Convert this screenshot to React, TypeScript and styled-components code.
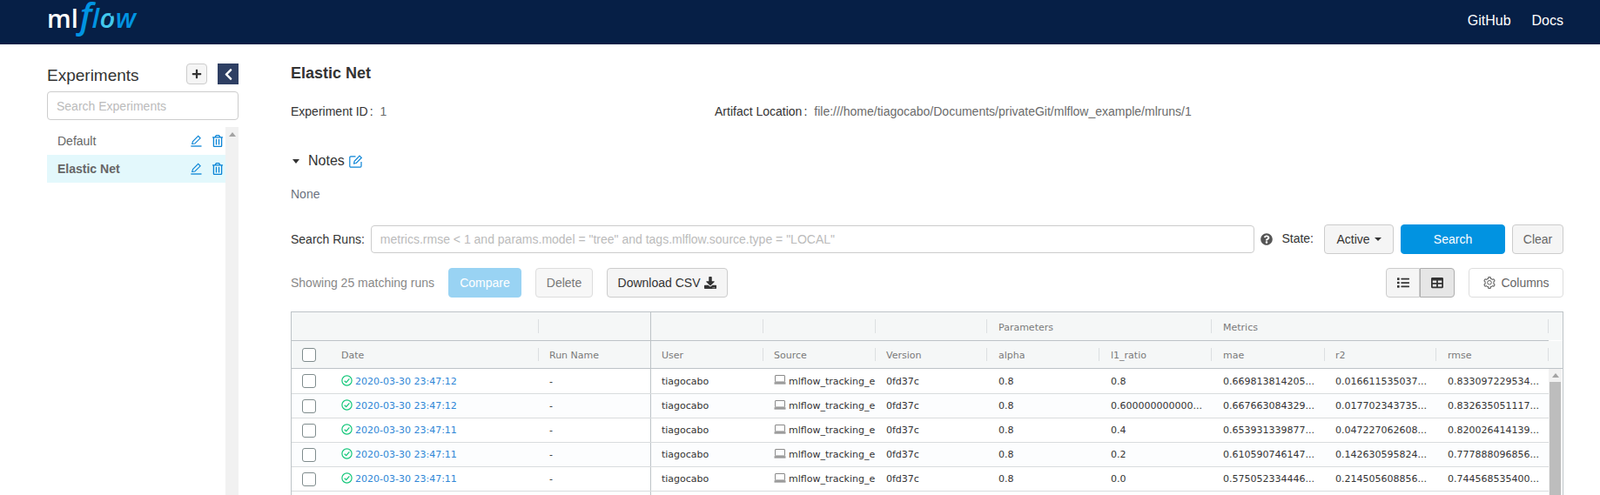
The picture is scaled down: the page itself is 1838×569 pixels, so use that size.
import React from "react";
import styled, { createGlobalStyle } from "styled-components";
import { FaRegTrashAlt, FaDownload, FaList, FaTable, FaQuestionCircle, FaPlus, FaChevronLeft } from "react-icons/fa";
import { AiOutlineSetting } from "react-icons/ai";

const Global = createGlobalStyle`
  html, body { margin: 0; padding: 0; height: 569px; overflow: hidden; background: #fff; }
  body { font-family: "Liberation Sans", Arial, sans-serif; font-size: 14px; color: #333; }
  * { box-sizing: border-box; }
`;

const NAVY = "#061f46";
const Page = styled.div`display: flex; flex-direction: column; height: 569px; overflow: hidden;`;
const TopBar = styled.header`
  height: 51px; flex: none; background: ${NAVY}; display: flex; align-items: center;
  justify-content: space-between; padding: 0 42px 0 54px;
`;
const Logo = styled.div`display: flex; align-items: baseline; height: 51px; line-height: 34px; font-family: "Open Sans", sans-serif;`;
const LogoMl = styled.span`color: #fff; font-size: 29px; font-weight: 600;`;
const LogoF = styled.span`color: #0194e2; font-size: 40px; font-style: italic; font-weight: 600; margin: 0 0 0 2px;`;
const LogoRest = styled.span`
  color: #0194e2; font-size: 31px; font-style: italic; font-weight: 600; letter-spacing: 0.5px;
`;
const LogoO = styled(LogoRest)`
  position: relative; color: #43c9ed;
  &::before, &::after {
    content: ""; position: absolute; width: 7px; height: 2.5px; background: ${NAVY}; transform: rotate(-55deg);
  }
  &::before { left: 11px; top: 11px; }
  &::after { left: 4px; top: 21px; }
`;
const TopLinks = styled.nav`display: flex; gap: 24px; margin-top: -3px;`;
const TopLink = styled.a`color: #fff; font-size: 16px;`;

const Content = styled.div`display: flex; flex: 1; min-height: 0; padding-left: 54px;`;
const Sidebar = styled.aside`width: 220px; flex: none; display: flex; flex-direction: column; padding-top: 22px;`;
const SideHead = styled.div`display: flex; align-items: center; height: 24px;`;
const SideTitle = styled.div`font-size: 19px; line-height: 24px; padding-top: 3px; color: #333; flex: 1;`;
const AddBtn = styled.button`
  width: 24px; height: 24px; padding: 0; display: flex; align-items: center; justify-content: center;
  background: #f5f5f5; border: 1px solid #ccc; border-radius: 4px; color: #333; font-size: 12px;
`;
const CollapseBtn = styled.button`
  width: 24px; height: 24px; margin-left: 12px; padding: 0; display: flex; align-items: center; justify-content: center;
  background: #2e3f63; border: 0; color: #fff; font-size: 15px;
`;
const SideSearch = styled.input`
  height: 33px; margin-top: 8px; padding: 0 10px; width: 100%; border: 1px solid #ccc; border-radius: 4px;
  font: 14px "Liberation Sans", sans-serif;
  &::placeholder { color: #bbb; }
`;
const SideListWrap = styled.div`display: flex; flex: 1; margin-top: 8px; min-height: 0;`;
const SideList = styled.div`flex: 1;`;
const SideRow = styled.div<{ $active?: boolean }>`
  height: 32px; display: flex; align-items: center; padding: 0 2px 0 12px;
  font-weight: ${p => (p.$active ? 700 : 400)}; color: #666;
  background: ${p => (p.$active ? "#e3f8fc" : "transparent")};
`;
const SideName = styled.span`flex: 1;`;
const SideIcons = styled.span`display: flex; align-items: center; gap: 10px; color: #0a84d6;`;
const SideScroll = styled.div`width: 15px; background: #f1f1f1; flex: none; display: flex; justify-content: center; padding-top: 6px;`;
const ArrowUp = styled.div`
  width: 0; height: 0; border-left: 4px solid transparent; border-right: 4px solid transparent;
  border-bottom: 5px solid #a3a3a3;
`;

const Main = styled.main`flex: 1; min-width: 0; margin-left: 60px; margin-right: 42px; padding-top: 22px;`;
const Title = styled.h1`margin: 0; font-size: 18px; line-height: 22px; font-weight: 700; color: #333;`;
const Meta = styled.div`display: flex; margin-top: 23px; line-height: 20px;`;
const MetaItem = styled.div<{ $w?: number }>`width: ${p => (p.$w ? `${p.$w}px` : "auto")}; color: #333;`;
const Colon = styled.span`margin: 0 8px 0 2px;`;
const MetaValue = styled.span`color: #6b6b6b;`;
const NotesRow = styled.div`display: flex; align-items: center; margin-top: 37px; line-height: 20px; font-size: 16px;`;
const Caret = styled.span`
  width: 0; height: 0; border-left: 4.5px solid transparent; border-right: 4.5px solid transparent;
  border-top: 5px solid #333; margin: 1px 10px 0 2px;
`;
const NotesEdit = styled.span`display: flex; color: #0a84d6; margin-left: 5px;`;
const NoneText = styled.div`margin-top: 18px; line-height: 20px; color: #6b7280;`;

const Row = styled.div<{ $mt: number }>`display: flex; align-items: center; height: 34px; margin-top: ${p => p.$mt}px;`;
const Label = styled.span<{ $up?: boolean }>`color: #333; white-space: nowrap; margin-bottom: ${p => (p.$up ? 3 : 0)}px;`;
const RunInput = styled.input`
  flex: 1; min-width: 0; height: 32px; margin-left: 7px; padding: 0 10px; border: 1px solid #ccc; border-radius: 4px;
  font: 14px "Liberation Sans", sans-serif;
  &::placeholder { color: #bbb; }
`;
const Help = styled.span`display: flex; color: #555; margin: 0 10px 0 7px; font-size: 14px;`;
const Btn = styled.button<{ $w: number; $ml?: number; $kind?: "primary" | "disabled" | "muted" | "white" | "pressed"; $flat?: "l" | "r" }>`
  height: 34px; width: ${p => p.$w}px; margin-left: ${p => p.$ml ?? 0}px; padding: 0; flex: none;
  display: flex; align-items: center; justify-content: center; gap: 5px;
  font: 14px "Liberation Sans", sans-serif; border-radius: 4px;
  ${p => p.$flat === "l" && "border-top-left-radius: 0; border-bottom-left-radius: 0;"}
  ${p => p.$flat === "r" && "border-top-right-radius: 0; border-bottom-right-radius: 0;"}
  background: ${p => ({ primary: "#0193e1", disabled: "#99d3f3", muted: "#f7f7f7", white: "#fff", pressed: "#e6e6e6" }[p.$kind ?? "muted"] ?? "#f5f5f5")};
  border: 1px solid ${p => ({ primary: "#0193e1", disabled: "#99d3f3", muted: "#ddd", white: "#ddd", pressed: "#adadad" }[p.$kind ?? "muted"] ?? "#ccc")};
  color: ${p => ({ primary: "#fff", disabled: "#fff", muted: "#777", white: "#666", pressed: "#333" }[p.$kind ?? "muted"] ?? "#333")};
`;
const DarkBtn = styled(Btn)`background: #f5f5f5; border-color: #ccc; color: #333;`;
const ClearBtn = styled(Btn)`background: #f5f5f5; border-color: #ccc; color: #666;`;
const SmallCaret = styled.span`
  width: 0; height: 0; border-left: 4px solid transparent; border-right: 4px solid transparent; border-top: 4px solid #333;
`;
const Matching = styled.span`color: #888; width: 181px; flex: none;`;
const Spacer = styled.span`flex: 1;`;

const FROZEN = "45px 239px 128px 1px";
const CENTER = "129px 129px 128px 129px 129px 130px 128px 129px";
const Table = styled.section`margin-top: 16px; border: 1px solid #bdc3c7; border-bottom: 0; height: 300px; overflow: hidden; font-family: "DejaVu Sans", sans-serif; font-size: 11px;`;
const HeadRow = styled.div<{ $tall?: boolean }>`
  display: grid; grid-template-columns: ${FROZEN} ${CENTER} 16px; background: #f5f7f7;
  height: ${p => (p.$tall ? 32 : 31)}px; color: #7a7a7a;
`;
const HeadLine = styled.div<{ $full?: boolean }>`height: 1px; background: #bdc3c7; margin-right: ${p => (p.$full ? 0 : 16)}px;`;
const HeadCell = styled.div<{ $span?: number; $sep?: boolean; $pad?: number }>`
  position: relative; display: flex; align-items: center; padding-left: ${p => p.$pad ?? 12}px; white-space: nowrap;
  grid-column: span ${p => p.$span ?? 1};
  ${p => p.$sep && `&::after { content: ""; position: absolute; right: 0; top: 8px; bottom: 8px; width: 1px; background: #dcdfe1; }`}
`;
const HeadText = styled.span`padding-top: 2px;`;
const Divider = styled.div`background: #bdc3c7;`;
const Check = styled.span`
  display: block; width: 16px; height: 16px; border: 1px solid #7f8c8d; border-radius: 3px; background: #fff;
`;
const BodyWrap = styled.div`display: flex; align-items: stretch; height: 200px;`;
const BodyRows = styled.div`flex: 1; min-width: 0;`;
const BodyRow = styled.div<{ $odd?: boolean; $first?: boolean }>`
  display: grid; grid-template-columns: ${FROZEN} ${CENTER};
  height: ${p => (p.$first ? 28 : 27)}px; background: ${p => (p.$odd ? "#fcfdfe" : "#fff")};
  color: #333;
`;
const RowLine = styled.div`height: 1px; background: #d9dcde;`;
const Cell = styled.div<{ $pad?: number }>`
  display: flex; align-items: center; padding-left: ${p => p.$pad ?? 12}px; white-space: nowrap; overflow: hidden; color: #333;
`;
const DateLink = styled.span`color: #2f86d6; margin-left: 3px;`;
const StatusIcon = styled.svg`flex: none; color: #13c77a; margin-top: -2px;`;
const LaptopIcon = styled.svg`flex: none; margin-right: 3px; margin-top: -3px; color: #8a8a8a;`;
const ScrollCol = styled.div`width: 15px; flex: none; margin-right: 1px; background: #f1f1f1; padding: 0 1px; display: flex; flex-direction: column; align-items: stretch;`;
const ScrollArrow = styled.div`
  align-self: center; width: 0; height: 0; margin-top: 5px; margin-bottom: 5px;
  border-left: 4px solid transparent; border-right: 4px solid transparent; border-bottom: 5px solid #a3a3a3;
`;
const ScrollThumb = styled.div`flex: 1; background: #bdbdbd;`;

const EditLine = () => (
  <svg width="15" height="14" viewBox="0 0 14 14" fill="none" stroke="currentColor" strokeWidth="1.1">
    <path d="M2.2 10.3 L3 7.6 L9.2 1.4 L11.6 3.8 L5.4 10 Z" />
    <path d="M0.8 13 H13" strokeWidth="1.3" />
  </svg>
);

const NoteIcon = () => (
  <svg width="15" height="15" viewBox="0 0 15 15" fill="none" stroke="currentColor" strokeWidth="1.2">
    <path d="M14 8 V13 a1.2 1.2 0 0 1-1.2 1.2 H2 a1.2 1.2 0 0 1-1.2-1.2 V3 a1.2 1.2 0 0 1 1.2-1.2 H7.5" />
    <path d="M5.6 10 L6.1 7.4 L12 1.2 L14.2 3.4 L8.2 9.5 Z" />
  </svg>
);

const Status = () => (
  <StatusIcon width="13" height="13" viewBox="0 0 13 13" fill="none" stroke="currentColor">
    <circle cx="6.5" cy="6.5" r="5.6" strokeWidth="1.2" />
    <path d="M3.7 6.7 L5.7 8.6 L9.4 4.4" strokeWidth="1.3" />
  </StatusIcon>
);

const Laptop = () => (
  <LaptopIcon width="14" height="11" viewBox="0 0 14 11">
    <rect x="1.5" y="0.5" width="11" height="7.5" rx="0.5" fill="none" stroke="currentColor" />
    <rect x="0.5" y="8.2" width="13" height="2.5" fill="currentColor" opacity="0.85" />
  </LaptopIcon>
);

type Run = { t: string; l1: string; mae: string; r2: string; rmse: string };
const runs: Run[] = [
  { t: "23:47:12", l1: "0.8", mae: "0.669813814205...", r2: "0.016611535037...", rmse: "0.833097229534..." },
  { t: "23:47:12", l1: "0.600000000000...", mae: "0.667663084329...", r2: "0.017702343735...", rmse: "0.832635051117..." },
  { t: "23:47:11", l1: "0.4", mae: "0.653931339877...", r2: "0.047227062608...", rmse: "0.820026414139..." },
  { t: "23:47:11", l1: "0.2", mae: "0.610590746147...", r2: "0.142630595824...", rmse: "0.777888096856..." },
  { t: "23:47:11", l1: "0.0", mae: "0.575052334446...", r2: "0.214505608856...", rmse: "0.744568535400..." },
];

export default function App() {
  return (
    <Page>
      <Global />
      <TopBar>
        <Logo>
          <LogoMl>ml</LogoMl>
          <LogoF>f</LogoF>
          <LogoRest>l</LogoRest>
          <LogoO>o</LogoO>
          <LogoRest>w</LogoRest>
        </Logo>
        <TopLinks>
          <TopLink>GitHub</TopLink>
          <TopLink>Docs</TopLink>
        </TopLinks>
      </TopBar>
      <Content>
        <Sidebar>
          <SideHead>
            <SideTitle>Experiments</SideTitle>
            <AddBtn><FaPlus /></AddBtn>
            <CollapseBtn><FaChevronLeft /></CollapseBtn>
          </SideHead>
          <SideSearch placeholder="Search Experiments" />
          <SideListWrap>
            <SideList>
              {["Default", "Elastic Net"].map((n, i) => (
                <SideRow key={n} $active={i === 1}>
                  <SideName>{n}</SideName>
                  <SideIcons><EditLine /><FaRegTrashAlt size={14} /></SideIcons>
                </SideRow>
              ))}
            </SideList>
            <SideScroll><ArrowUp /></SideScroll>
          </SideListWrap>
        </Sidebar>
        <Main>
          <Title>Elastic Net</Title>
          <Meta>
            <MetaItem $w={487}>Experiment ID<Colon>:</Colon><MetaValue>1</MetaValue></MetaItem>
            <MetaItem>Artifact Location<Colon>:</Colon><MetaValue>file:///home/tiagocabo/Documents/privateGit/mlflow_example/mlruns/1</MetaValue></MetaItem>
          </Meta>
          <NotesRow><Caret />Notes<NotesEdit><NoteIcon /></NotesEdit></NotesRow>
          <NoneText>None</NoneText>
          <Row $mt={25}>
            <Label>Search Runs:</Label>
            <RunInput placeholder={'metrics.rmse < 1 and params.model = "tree" and tags.mlflow.source.type = "LOCAL"'} />
            <Help><FaQuestionCircle /></Help>
            <Label $up>State:</Label>
            <DarkBtn $w={80} $ml={12}>Active <SmallCaret /></DarkBtn>
            <Btn $w={120} $ml={8} $kind="primary">Search</Btn>
            <ClearBtn $w={59} $ml={8}>Clear</ClearBtn>
          </Row>
          <Row $mt={16}>
            <Matching>Showing 25 matching runs</Matching>
            <Btn $w={84} $kind="disabled">Compare</Btn>
            <Btn $w={66} $ml={16}>Delete</Btn>
            <DarkBtn $w={139} $ml={16}>Download CSV <FaDownload /></DarkBtn>
            <Spacer />
            <DarkBtn $w={39} $flat="r"><FaList /></DarkBtn>
            <Btn $w={40} $kind="pressed" $flat="l"><FaTable /></Btn>
            <Btn $w={109} $ml={16} $kind="white"><AiOutlineSetting size={16} /> Columns</Btn>
          </Row>
          <Table>
            <HeadRow $tall>
              <HeadCell $span={2} $sep />
              <HeadCell />
              <Divider />
              <HeadCell $sep />
              <HeadCell $sep />
              <HeadCell $sep />
              <HeadCell $span={2} $sep $pad={13}><HeadText>Parameters</HeadText></HeadCell>
              <HeadCell $span={3} $sep $pad={13}><HeadText>Metrics</HeadText></HeadCell>
              <HeadCell />
            </HeadRow>
            <HeadLine />
            <HeadRow>
              <HeadCell><Check /></HeadCell>
              <HeadCell $sep><HeadText>Date</HeadText></HeadCell>
              <HeadCell><HeadText>Run Name</HeadText></HeadCell>
              <Divider />
              <HeadCell $sep><HeadText>User</HeadText></HeadCell>
              <HeadCell $sep><HeadText>Source</HeadText></HeadCell>
              <HeadCell $sep><HeadText>Version</HeadText></HeadCell>
              <HeadCell $sep $pad={13}><HeadText>alpha</HeadText></HeadCell>
              <HeadCell $sep $pad={13}><HeadText>l1_ratio</HeadText></HeadCell>
              <HeadCell $sep $pad={13}><HeadText>mae</HeadText></HeadCell>
              <HeadCell $sep><HeadText>r2</HeadText></HeadCell>
              <HeadCell $sep $pad={13}><HeadText>rmse</HeadText></HeadCell>
              <HeadCell />
            </HeadRow>
            <HeadLine $full />
            <BodyWrap>
              <BodyRows>
                {runs.map((r, i) => (
                  <React.Fragment key={i}>
                    <BodyRow $odd={i % 2 === 1} $first={i === 0}>
                      <Cell><Check /></Cell>
                      <Cell><Status /><DateLink>2020-03-30 {r.t}</DateLink></Cell>
                      <Cell>-</Cell>
                      <Divider />
                      <Cell>tiagocabo</Cell>
                      <Cell><Laptop />mlflow_tracking_e</Cell>
                      <Cell>0fd37c</Cell>
                      <Cell $pad={13}>0.8</Cell>
                      <Cell $pad={13}>{r.l1}</Cell>
                      <Cell $pad={13}>{r.mae}</Cell>
                      <Cell>{r.r2}</Cell>
                      <Cell $pad={13}>{r.rmse}</Cell>
                    </BodyRow>
                    <RowLine />
                  </React.Fragment>
                ))}
                <BodyRow>
                  <Cell /><Cell /><Cell /><Divider />
                </BodyRow>
              </BodyRows>
              <ScrollCol><ScrollArrow /><ScrollThumb /></ScrollCol>
            </BodyWrap>
          </Table>
        </Main>
      </Content>
    </Page>
  );
}
